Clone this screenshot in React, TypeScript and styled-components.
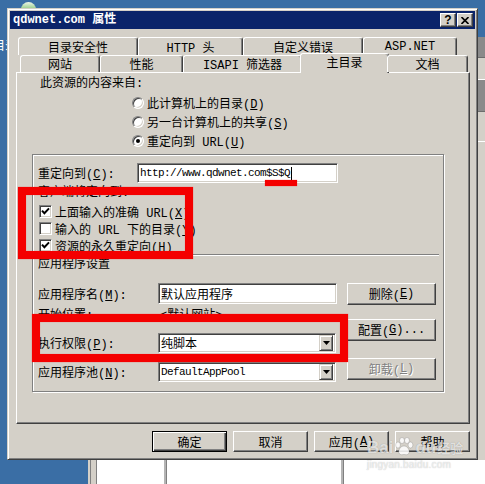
import React from 'react'
import styled, { createGlobalStyle } from 'styled-components'

const FACE = '#d4d0c8'
const HI = '#ffffff'
const SHADOW = '#808080'
const DARK = '#404040'
const FONT = `"Liberation Mono", "Noto Sans CJK SC", monospace`

const GlobalStyle = createGlobalStyle`
  html, body { margin: 0; padding: 0; background: #3a6ea5; }
  body { font-family: ${FONT}; font-size: 12px; color: #000; }
  * { box-sizing: border-box; }
`

const Desktop = styled.div`
  position: relative;
  width: 485px;
  height: 484px;
  overflow: hidden;
  background: #3a6ea5;
`

const DesktopIcon = styled.div`
  position: absolute;
  left: 21px;
  top: 2px;
  width: 15px;
  height: 8px;
  border-radius: 8px 8px 0 0;
  background: linear-gradient(#eef6e8, #86c478);
`

const DesktopLabel = styled.div`
  position: absolute;
  left: -7px;
  top: 36px;
  color: #fff;
  font-size: 12px;
`

/* window behind the dialog */
const BackWindow = styled.div`
  position: absolute;
  left: 88px;
  top: 37px;
  width: 400px;
  height: 450px;
  display: flex;
  flex-direction: column;
  background: ${FACE};
`

const Band = styled.div<{ $h: number; $dark?: boolean }>`
  height: ${p => p.$h}px;
  background: ${p => (p.$dark ? '#8a8a8a' : FACE)};
  border-bottom: 1px solid ${p => (p.$dark ? '#6c6c6c' : HI)};
`

const BackPane = styled.div`
  flex: 1;
`

const ListView = styled.div`
  height: 27px;
  display: flex;
  margin-left: 2px;
  border-left: 1px solid ${SHADOW};
  padding-left: 5px;
  background: ${FACE};
`

const ListCol = styled.div<{ $w?: number }>`
  width: ${p => (p.$w ? `${p.$w}px` : 'auto')};
  flex: ${p => (p.$w ? 'none' : 1)};
  background: #fff;
  border-left: 1px solid ${SHADOW};
  border-right: 2px solid #b4b4b4;
`

/* dialog */
const Dialog = styled.div`
  position: absolute;
  left: 7px;
  top: 8px;
  width: 471px;
  height: 452px;
  display: flex;
  flex-direction: column;
  padding: 2px;
  background: ${FACE};
  border: 1px solid;
  border-color: ${FACE} ${DARK} ${DARK} ${FACE};
  box-shadow: inset 1px 1px ${HI}, inset -1px -1px ${SHADOW};
`

const TitleBar = styled.div`
  height: 18px;
  flex: none;
  display: flex;
  align-items: center;
  padding: 0 2px 0 3px;
  background: #0a246a;
  color: #fff;
  font-weight: bold;
`

const TitleText = styled.span`
  flex: 1;
  line-height: 18px;
  white-space: nowrap;
`

const CaptionButton = styled.div<{ $gap?: number }>`
  width: 16px;
  height: 14px;
  margin-left: ${p => p.$gap ?? 0}px;
  display: flex;
  align-items: center;
  justify-content: center;
  background: ${FACE};
  border: 1px solid;
  border-color: ${HI} ${DARK} ${DARK} ${HI};
  box-shadow: inset -1px -1px ${SHADOW};
  color: #000;
  font: bold 12px "Liberation Sans", sans-serif;
`

const Body = styled.div`
  flex: 1;
  display: flex;
  flex-direction: column;
  padding: 8px 5px 0 6px;
`

const TabStrip = styled.div`
  display: flex;
  flex-direction: column;
  position: relative;
  z-index: 1;
`

const TabRow = styled.div<{ $indent: number; $h: number }>`
  display: flex;
  align-items: flex-end;
  height: ${p => p.$h}px;
  margin-left: ${p => p.$indent}px;
`

const Tab = styled.div<{ $w: number; $active?: boolean }>`
  width: ${p => p.$w + (p.$active ? 4 : 0)}px;
  height: ${p => (p.$active ? 'calc(100% + 3px)' : '100%')};
  margin: ${p => (p.$active ? '0 -2px -1px' : '0')};
  padding-bottom: ${p => (p.$active ? 3 : 0)}px;
  display: flex;
  align-items: center;
  justify-content: center;
  background: ${FACE};
  border-top: 1px solid ${HI};
  border-left: 1px solid ${HI};
  border-right: 1px solid ${DARK};
  border-radius: 3px 3px 0 0;
  box-shadow: inset -1px 0 ${SHADOW};
  white-space: nowrap;
`

const Panel = styled.div`
  width: 454px;
  height: 352px;
  flex: none;
  display: flex;
  flex-direction: column;
  align-items: flex-start;
  border: 1px solid;
  border-color: ${HI} ${DARK} ${DARK} ${HI};
  box-shadow: inset -1px -1px ${SHADOW};
`

const Heading = styled.div`
  margin: 4px 0 0 23px;
  line-height: 14px;
`

const RadioGroup = styled.div`
  margin: 2px 0 0 115px;
  display: flex;
  flex-direction: column;
`

const OptionRow = styled.div<{ $h: number }>`
  height: ${p => p.$h}px;
  display: flex;
  align-items: center;
  gap: 3px;
  white-space: nowrap;
`

const Radio = styled.span<{ $on?: boolean }>`
  position: relative;
  width: 12px;
  height: 12px;
  flex: none;
  border-radius: 50%;
  background: #fff;
  border: 1px solid;
  border-color: ${SHADOW} ${HI} ${HI} ${SHADOW};
  box-shadow: inset 1px 1px ${DARK}, inset -1px -1px ${FACE};
  &::after {
    content: '';
    display: ${p => (p.$on ? 'block' : 'none')};
    position: absolute;
    left: 3px;
    top: 3px;
    width: 4px;
    height: 4px;
    border-radius: 50%;
    background: #000;
  }
`

const Frame = styled.div`
  margin: 4px 0 0 15px;
  width: 412px;
  height: 238px;
  display: flex;
  flex-direction: column;
  align-items: flex-start;
  border: 1px solid ${SHADOW};
  box-shadow: inset 1px 1px ${HI}, 1px 1px ${HI};
`

const FieldRow = styled.div<{ $top?: number; $h: number; $pad?: number }>`
  margin-top: ${p => p.$top ?? 0}px;
  padding-left: ${p => p.$pad ?? 0}px;
  height: ${p => p.$h}px;
  display: flex;
  align-items: center;
  white-space: nowrap;
`

const FieldLabel = styled.span<{ $w: number }>`
  width: ${p => p.$w}px;
  flex: none;
`

const TextLine = styled.div<{ $top: number }>`
  margin-top: ${p => p.$top}px;
  padding-left: 5px;
  line-height: 14px;
  white-space: nowrap;
`

const CheckList = styled.div`
  margin-top: 3px;
  padding-left: 6px;
  display: flex;
  flex-direction: column;
`

const CheckBox = styled.span`
  width: 13px;
  height: 13px;
  flex: none;
  display: flex;
  align-items: center;
  justify-content: center;
  background: #fff;
  border: 1px solid;
  border-color: ${SHADOW} ${HI} ${HI} ${SHADOW};
  box-shadow: inset 1px 1px ${DARK}, inset -1px -1px ${FACE};
`

const Separator = styled.div`
  align-self: stretch;
  height: 2px;
  margin: 0 4px 0 2px;
  border-top: 1px solid ${SHADOW};
  border-bottom: 1px solid ${HI};
`

const AppSection = styled.div`
  margin-top: 11px;
  padding-left: 5px;
  display: flex;
`

const Column = styled.div`
  display: flex;
  flex-direction: column;
`

const ButtonColumn = styled(Column)`
  margin-left: 10px;
`

const Sunken = styled.div<{ $w: number; $h: number }>`
  width: ${p => p.$w}px;
  height: ${p => p.$h}px;
  display: flex;
  align-items: center;
  padding-left: 2px;
  background: #fff;
  border: 1px solid;
  border-color: ${SHADOW} ${HI} ${HI} ${SHADOW};
  box-shadow: inset 1px 1px ${DARK}, inset -1px -1px ${FACE};
  white-space: nowrap;
  overflow: hidden;
`

const Mono = styled.span`
  font-family: "Liberation Mono", monospace;
  font-size: 11px;
  letter-spacing: -0.6px;
`

const Caret = styled.span`
  display: inline-block;
  width: 1px;
  height: 13px;
  margin-left: 1px;
  background: #000;
`

const ComboValue = styled.span`
  flex: 1;
`

const DropButton = styled.span`
  width: 14px;
  height: 16px;
  margin-right: 2px;
  display: flex;
  align-items: center;
  justify-content: center;
  background: ${FACE};
  border: 1px solid;
  border-color: ${FACE} ${DARK} ${DARK} ${FACE};
  box-shadow: inset 1px 1px ${HI}, inset -1px -1px ${SHADOW};
`

const PushButton = styled.div<{ $w: number; $h: number; $top?: number; $default?: boolean; $disabled?: boolean }>`
  width: ${p => p.$w}px;
  height: ${p => p.$h}px;
  margin-top: ${p => p.$top ?? 0}px;
  display: flex;
  align-items: center;
  justify-content: center;
  background: ${FACE};
  border: 1px solid;
  border-color: ${p => (p.$default ? '#000' : `${HI} ${DARK} ${DARK} ${HI}`)};
  box-shadow: ${p =>
    p.$default
      ? `inset 1px 1px ${HI}, inset -1px -1px ${DARK}, inset -2px -2px ${SHADOW}`
      : `inset -1px -1px ${SHADOW}`};
  color: ${p => (p.$disabled ? SHADOW : '#000')};
  text-shadow: ${p => (p.$disabled ? `1px 1px 0 ${HI}` : 'none')};
  white-space: nowrap;
`

const ButtonRow = styled.div`
  margin-top: 7px;
  display: flex;
  justify-content: flex-end;
  gap: 6px;
`

const Key = styled.u`
  text-underline-offset: 1px;
`

/* annotations drawn over the screenshot */
const RedBox = styled.div<{ $x: number; $y: number; $w: number; $h: number }>`
  position: absolute;
  left: ${p => p.$x}px;
  top: ${p => p.$y}px;
  width: ${p => p.$w}px;
  height: ${p => p.$h}px;
  border: 8px solid #f40000;
  box-shadow: 0 0 1px rgba(255, 0, 0, 0.6), inset 0 0 1px rgba(255, 0, 0, 0.6);
`

const RedMark = styled.div`
  position: absolute;
  left: 265px;
  top: 180px;
  width: 32px;
  height: 6px;
  background: #f40000;
  box-shadow: 0 0 1px rgba(255, 0, 0, 0.6);
`

const Watermark = styled.div`
  position: absolute;
  left: 367px;
  top: 437px;
  display: flex;
  flex-direction: column;
  color: rgba(255, 255, 255, 0.7);
  text-shadow: 0 0 1px rgba(0, 0, 0, 0.3);
  pointer-events: none;
`

const WmMain = styled.div`
  display: flex;
  align-items: flex-end;
  font: bold 17px "Liberation Sans", sans-serif;
  line-height: 18px;
`

const WmCn = styled.span`
  font: bold 13px "Noto Sans CJK SC", sans-serif;
  margin-left: 1px;
`

const WmSub = styled.div`
  font: 10px "Liberation Sans", sans-serif;
  margin-top: 2px;
  letter-spacing: 0.2px;
`

const Check = () => (
  <svg width="9" height="9" viewBox="0 0 9 9">
    <path d="M1 3.6 L3.4 6.2 L8 1.4" fill="none" stroke="#000" strokeWidth="2" />
  </svg>
)

const DownArrow = () => (
  <svg width="7" height="4" viewBox="0 0 7 4">
    <polygon points="0,0 7,0 3.5,4" fill="#000" />
  </svg>
)

const CloseGlyph = () => (
  <svg width="8" height="7" viewBox="0 0 8 7">
    <path d="M0.5 0 L7.5 7 M7.5 0 L0.5 7" stroke="#000" strokeWidth="1.6" />
  </svg>
)

const Paw = () => (
  <svg width="20" height="19" viewBox="0 0 20 19" style={{ margin: '0 1px 1px' }}>
    <g fill="rgba(255,255,255,0.85)" stroke="rgba(0,0,0,0.25)" strokeWidth="0.6">
      <ellipse cx="4" cy="8" rx="2.4" ry="3" />
      <ellipse cx="8" cy="3.5" rx="2.4" ry="3" />
      <ellipse cx="13" cy="3.5" rx="2.4" ry="3" />
      <ellipse cx="16.5" cy="8" rx="2.4" ry="3" />
      <path d="M10 9 C6 9 4 14 5 16 C6 18.5 9 17.5 10 17.5 C11 17.5 14 18.5 15 16 C16 14 14 9 10 9 Z" />
    </g>
  </svg>
)

const backTabs = [
  { label: '目录安全性', w: 120 },
  { label: 'HTTP 头', w: 105 },
  { label: '自定义错误', w: 120 },
  { label: 'ASP.NET', w: 94 },
]

const frontTabs = [
  { label: '网站', w: 80 },
  { label: '性能', w: 83 },
  { label: 'ISAPI 筛选器', w: 119 },
  { label: '主目录', w: 85, active: true },
  { label: '文档', w: 81 },
]

const App = () => {
  return (
    <Desktop>
      <GlobalStyle />
      <DesktopIcon />
      <DesktopLabel>目录</DesktopLabel>

      <BackWindow>
        <Band $h={21} $dark />
        <Band $h={22} />
        <Band $h={32} $dark />
        <Band $h={30} />
        <BackPane />
        <ListView>
          <ListCol $w={70} />
          <ListCol $w={177} />
          <ListCol />
        </ListView>
      </BackWindow>

      <Dialog>
        <TitleBar>
          <TitleText>qdwnet.com 属性</TitleText>
          <CaptionButton>?</CaptionButton>
          <CaptionButton $gap={1}>
            <CloseGlyph />
          </CaptionButton>
        </TitleBar>

        <Body>
          <TabStrip>
            <TabRow $indent={2} $h={18}>
              {backTabs.map(t => (
                <Tab key={t.label} $w={t.w}>
                  {t.label}
                </Tab>
              ))}
            </TabRow>
            <TabRow $indent={4} $h={17}>
              {frontTabs.map(t => (
                <Tab key={t.label} $w={t.w} $active={t.active}>
                  {t.label}
                </Tab>
              ))}
            </TabRow>
          </TabStrip>

          <Panel>
            <Heading>此资源的内容来自:</Heading>
            <RadioGroup>
              <OptionRow $h={19}>
                <Radio />
                <span>此计算机上的目录(<Key>D</Key>)</span>
              </OptionRow>
              <OptionRow $h={19}>
                <Radio />
                <span>另一台计算机上的共享(<Key>S</Key>)</span>
              </OptionRow>
              <OptionRow $h={19}>
                <Radio $on />
                <span>重定向到 URL(<Key>U</Key>)</span>
              </OptionRow>
            </RadioGroup>

            <Frame>
              <FieldRow $top={8} $h={20} $pad={5}>
                <FieldLabel $w={99}>
                  重定向到(<Key>C</Key>):
                </FieldLabel>
                <Sunken $w={201} $h={20}>
                  <Mono>http://www.qdwnet.com$S$Q</Mono>
                  <Caret />
                </Sunken>
              </FieldRow>

              <TextLine $top={3}>客户端将定向到:</TextLine>

              <CheckList>
                <OptionRow $h={17}>
                  <CheckBox>
                    <Check />
                  </CheckBox>
                  <span>上面输入的准确 URL(<Key>X</Key>)</span>
                </OptionRow>
                <OptionRow $h={17}>
                  <CheckBox />
                  <span>输入的 URL 下的目录(<Key>Y</Key>)</span>
                </OptionRow>
                <OptionRow $h={17}>
                  <CheckBox>
                    <Check />
                  </CheckBox>
                  <span>资源的永久重定向(<Key>H</Key>)</span>
                </OptionRow>
              </CheckList>

              <Separator />
              <TextLine $top={2}>应用程序设置</TextLine>

              <AppSection>
                <Column>
                  <FieldRow $h={21}>
                    <FieldLabel $w={120}>
                      应用程序名(<Key>M</Key>):
                    </FieldLabel>
                    <Sunken $w={179} $h={21}>
                      默认应用程序
                    </Sunken>
                  </FieldRow>
                  <FieldRow $top={3} $h={14}>
                    <FieldLabel $w={122}>开始位置:</FieldLabel>
                    <span>&lt;默认网站&gt;</span>
                  </FieldRow>
                  <FieldRow $top={12} $h={20}>
                    <FieldLabel $w={120}>
                      执行权限(<Key>P</Key>):
                    </FieldLabel>
                    <Sunken $w={178} $h={20}>
                      <ComboValue>纯脚本</ComboValue>
                      <DropButton>
                        <DownArrow />
                      </DropButton>
                    </Sunken>
                  </FieldRow>
                  <FieldRow $top={9} $h={20}>
                    <FieldLabel $w={120}>
                      应用程序池(<Key>N</Key>):
                    </FieldLabel>
                    <Sunken $w={178} $h={20}>
                      <ComboValue>
                        <Mono>DefaultAppPool</Mono>
                      </ComboValue>
                      <DropButton>
                        <DownArrow />
                      </DropButton>
                    </Sunken>
                  </FieldRow>
                </Column>

                <ButtonColumn>
                  <PushButton $w={89} $h={22}>
                    删除(<Key>E</Key>)
                  </PushButton>
                  <PushButton $w={89} $h={22} $top={14}>
                    配置(<Key>G</Key>)...
                  </PushButton>
                  <PushButton $w={89} $h={22} $top={17} $disabled>
                    卸载(<Key>L</Key>)
                  </PushButton>
                </ButtonColumn>
              </AppSection>
            </Frame>
          </Panel>

          <ButtonRow>
            <PushButton $w={75} $h={21} $default>
              确定
            </PushButton>
            <PushButton $w={75} $h={21}>
              取消
            </PushButton>
            <PushButton $w={75} $h={21}>
              应用(<Key>A</Key>)
            </PushButton>
            <PushButton $w={75} $h={21}>
              帮助
            </PushButton>
          </ButtonRow>
        </Body>
      </Dialog>

      <RedMark />
      <RedBox $x={18} $y={187} $w={175} $h={72} />
      <RedBox $x={32} $y={314} $w={316} $h={48} />

      <Watermark>
        <WmMain>
          Bai
          <Paw />
          du
          <WmCn>经验</WmCn>
        </WmMain>
        <WmSub>jingyan.baidu.com</WmSub>
      </Watermark>
    </Desktop>
  )
}

export default App
